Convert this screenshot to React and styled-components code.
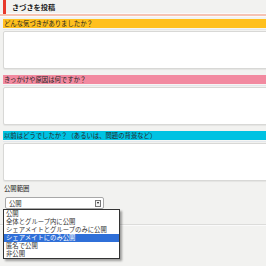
import React from "react";
import styled, { createGlobalStyle } from "styled-components";

const Global = createGlobalStyle`
  html, body { margin: 0; padding: 0; background: #f2f2f0; overflow: hidden; }
  body { font-family: "Noto Sans CJK JP", "Noto Sans", sans-serif; color: #333; }
`;

const Page = styled.div`
  width: 266px;
  height: 266px;
  overflow: hidden;
  position: relative;
`;

const Header = styled.div`
  height: 13px;
  display: flex;
  align-items: center;
  padding-left: 3px;
  border-bottom: 1px solid #fbfbfa;
  box-shadow: 0 1px 0 #f6c3b3, 0 2px 0 #f6c3b3, 0 3px 0 #fafafa;
`;

const RedMark = styled.span`
  width: 3px;
  height: 14px;
  align-self: flex-start;
  background: #e8382a;
`;

const Title = styled.h1`
  margin: 0 0 0 6px;
  font-size: 7.2px;
  font-weight: 700;
  line-height: 8px;
  color: #222;
`;

const Form = styled.div`
  padding: 5px 0 0 3px;
`;

const Field = styled.div`
  display: flex;
  flex-direction: column;
  margin-bottom: 6px;
`;

const Bar = styled.div`
  height: 9px;
  width: 300px;
  background: ${(p) => p.$color};
  font-size: 6.35px;
  line-height: 9px;
  color: #222;
  padding-left: 1px;
  white-space: nowrap;
  box-shadow: 0 1px 0 #f6f6f4, 0 2px 0 #e3e7ec;
`;

const TextArea = styled.textarea`
  margin-top: 3px;
  height: 38px;
  width: 300px;
  box-sizing: border-box;
  border: 1px solid #d8d8d6;
  border-radius: 2px;
  background: #fff;
  resize: none;
  padding: 0;
  display: block;
  box-shadow: 0 1px 1px rgba(0, 0, 0, 0.06);
`;

const Label = styled.div`
  font-size: 6.35px;
  line-height: 8px;
  margin: -2px 0 4px 1px;
  color: #222;
`;

const SelectWrap = styled.div`
  position: relative;
  margin-left: 2px;
  width: 99px;
`;

const SelectBox = styled.div`
  height: 12px;
  box-sizing: border-box;
  border: 1px solid #a8a8a8;
  border-radius: 2px;
  background: #fff;
  display: flex;
  align-items: center;
  justify-content: space-between;
  padding: 0 2px 0 3px;
  font-size: 6.35px;
  color: #333;
`;

const Arrow = styled.span`
  width: 6px;
  height: 7px;
  box-sizing: border-box;
  border: 1px solid #777;
  background: #f4f4f4;
  display: flex;
  align-items: center;
  justify-content: center;
  &::after {
    content: "";
    border-left: 1.5px solid transparent;
    border-right: 1.5px solid transparent;
    border-top: 2px solid #111;
  }
`;

const List = styled.ul`
  position: absolute;
  top: 12px;
  left: -2px;
  width: 115px;
  margin: 0;
  padding: 0;
  list-style: none;
  background: #fff;
  border: 1px solid #333;
  box-shadow: 2px 2px 2px rgba(0, 0, 0, 0.35);
  z-index: 2;
`;

const Item = styled.li`
  height: 8px;
  line-height: 8px;
  font-size: 6.35px;
  padding-left: 2px;
  white-space: nowrap;
  color: ${(p) => (p.$active ? "#fff" : "#333")};
  background: ${(p) => (p.$active ? "#2f6fd8" : "transparent")};
`;

const Divider = styled.div`
  margin-top: 15px;
  height: 1px;
  background: #dcdcda;
  box-shadow: 0 1px 0 #fafafa;
`;

const fields = [
  { color: "#ffc01e", label: "どんな気づきがありましたか？" },
  { color: "#f28aa0", label: "きっかけや原因は何ですか？" },
  { color: "#00c2e2", label: "以前はどうでしたか？（あるいは、問題の背景など）" },
];

const options = [
  "公開",
  "全体とグループ内に公開",
  "シェアメイトとグループのみに公開",
  "シェアメイトにのみ公開",
  "匿名で公開",
  "非公開",
];

export default function App() {
  return (
    <Page>
      <Global />
      <Header>
        <RedMark />
        <Title>きづきを投稿</Title>
      </Header>
      <Form>
        {fields.map((f) => (
          <Field key={f.label}>
            <Bar $color={f.color}>{f.label}</Bar>
            <TextArea />
          </Field>
        ))}
        <Label>公開範囲</Label>
        <SelectWrap>
          <SelectBox>
            <span>公開</span>
            <Arrow />
          </SelectBox>
          <List>
            {options.map((o, i) => (
              <Item key={o} $active={i === 3}>
                {o}
              </Item>
            ))}
          </List>
        </SelectWrap>
      </Form>
      <Divider />
    </Page>
  );
}
